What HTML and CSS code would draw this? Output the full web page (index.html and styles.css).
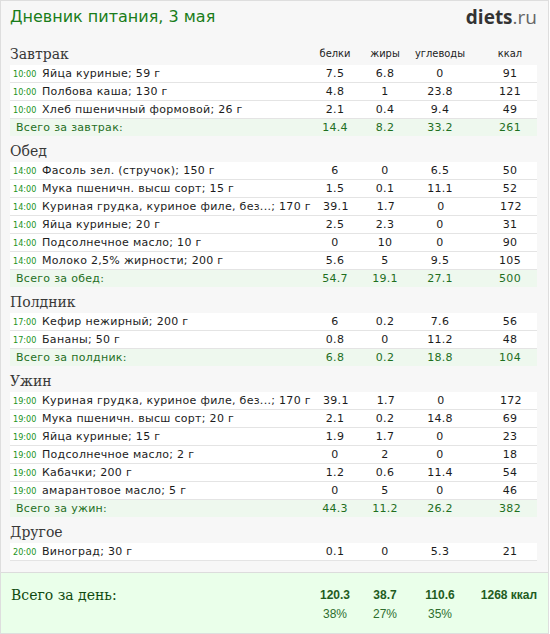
FILE: index.html
```html
<!DOCTYPE html>
<html lang="ru">
<head>
<meta charset="utf-8">
<title>Дневник питания</title>
<link rel="stylesheet" href="styles.css">
</head>
<body>
<div class="page">
  <header class="top">
    <h1 class="title">Дневник питания, 3 мая</h1>
    <div class="logo"><b>diets</b>.ru</div>
  </header>

  <div class="content">
    <div class="meal-head">
      <div class="meal-name">Завтрак</div>
      <div class="col">белки</div>
      <div class="col">жиры</div>
      <div class="col wide">углеводы</div>
      <div class="col last">ккал</div>
    </div>
    <div class="row"><div class="name"><span class="time">10:00</span>Яйца куриные; 59 г</div><div class="col">7.5</div><div class="col">6.8</div><div class="col wide">0</div><div class="col last">91</div></div>
    <div class="row"><div class="name"><span class="time">10:00</span>Полбова каша; 130 г</div><div class="col">4.8</div><div class="col">1</div><div class="col wide">23.8</div><div class="col last">121</div></div>
    <div class="row"><div class="name"><span class="time">10:00</span>Хлеб пшеничный формовой; 26 г</div><div class="col">2.1</div><div class="col">0.4</div><div class="col wide">9.4</div><div class="col last">49</div></div>
    <div class="row total"><div class="name">Всего за завтрак:</div><div class="col">14.4</div><div class="col">8.2</div><div class="col wide">33.2</div><div class="col last">261</div></div>

    <div class="meal-head"><div class="meal-name">Обед</div></div>
    <div class="row"><div class="name"><span class="time">14:00</span>Фасоль зел. (стручок); 150 г</div><div class="col">6</div><div class="col">0</div><div class="col wide">6.5</div><div class="col last">50</div></div>
    <div class="row"><div class="name"><span class="time">14:00</span>Мука пшеничн. высш сорт; 15 г</div><div class="col">1.5</div><div class="col">0.1</div><div class="col wide">11.1</div><div class="col last">52</div></div>
    <div class="row"><div class="name"><span class="time">14:00</span>Куриная грудка, куриное филе, без...; 170 г</div><div class="col">39.1</div><div class="col">1.7</div><div class="col wide">0</div><div class="col last">172</div></div>
    <div class="row"><div class="name"><span class="time">14:00</span>Яйца куриные; 20 г</div><div class="col">2.5</div><div class="col">2.3</div><div class="col wide">0</div><div class="col last">31</div></div>
    <div class="row"><div class="name"><span class="time">14:00</span>Подсолнечное масло; 10 г</div><div class="col">0</div><div class="col">10</div><div class="col wide">0</div><div class="col last">90</div></div>
    <div class="row"><div class="name"><span class="time">14:00</span>Молоко 2,5% жирности; 200 г</div><div class="col">5.6</div><div class="col">5</div><div class="col wide">9.5</div><div class="col last">105</div></div>
    <div class="row total"><div class="name">Всего за обед:</div><div class="col">54.7</div><div class="col">19.1</div><div class="col wide">27.1</div><div class="col last">500</div></div>

    <div class="meal-head"><div class="meal-name">Полдник</div></div>
    <div class="row"><div class="name"><span class="time">17:00</span>Кефир нежирный; 200 г</div><div class="col">6</div><div class="col">0.2</div><div class="col wide">7.6</div><div class="col last">56</div></div>
    <div class="row"><div class="name"><span class="time">17:00</span>Бананы; 50 г</div><div class="col">0.8</div><div class="col">0</div><div class="col wide">11.2</div><div class="col last">48</div></div>
    <div class="row total"><div class="name">Всего за полдник:</div><div class="col">6.8</div><div class="col">0.2</div><div class="col wide">18.8</div><div class="col last">104</div></div>

    <div class="meal-head"><div class="meal-name">Ужин</div></div>
    <div class="row"><div class="name"><span class="time">19:00</span>Куриная грудка, куриное филе, без...; 170 г</div><div class="col">39.1</div><div class="col">1.7</div><div class="col wide">0</div><div class="col last">172</div></div>
    <div class="row"><div class="name"><span class="time">19:00</span>Мука пшеничн. высш сорт; 20 г</div><div class="col">2.1</div><div class="col">0.2</div><div class="col wide">14.8</div><div class="col last">69</div></div>
    <div class="row"><div class="name"><span class="time">19:00</span>Яйца куриные; 15 г</div><div class="col">1.9</div><div class="col">1.7</div><div class="col wide">0</div><div class="col last">23</div></div>
    <div class="row"><div class="name"><span class="time">19:00</span>Подсолнечное масло; 2 г</div><div class="col">0</div><div class="col">2</div><div class="col wide">0</div><div class="col last">18</div></div>
    <div class="row"><div class="name"><span class="time">19:00</span>Кабачки; 200 г</div><div class="col">1.2</div><div class="col">0.6</div><div class="col wide">11.4</div><div class="col last">54</div></div>
    <div class="row"><div class="name"><span class="time">19:00</span>амарантовое масло; 5 г</div><div class="col">0</div><div class="col">5</div><div class="col wide">0</div><div class="col last">46</div></div>
    <div class="row total"><div class="name">Всего за ужин:</div><div class="col">44.3</div><div class="col">11.2</div><div class="col wide">26.2</div><div class="col last">382</div></div>

    <div class="meal-head"><div class="meal-name">Другое</div></div>
    <div class="row"><div class="name"><span class="time">20:00</span>Виноград; 30 г</div><div class="col">0.1</div><div class="col">0</div><div class="col wide">5.3</div><div class="col last">21</div></div>
  </div>

  <footer class="day">
    <div class="day-label">Всего за день:</div>
    <div class="col"><b>120.3</b><span>38%</span></div>
    <div class="col"><b>38.7</b><span>27%</span></div>
    <div class="col wide"><b>110.6</b><span>35%</span></div>
    <div class="col last"><b>1268 ккал</b></div>
  </footer>
</div>
</body>
</html>
```

FILE: styles.css
```css
html, body {
  margin: 0;
  padding: 0;
  background: #ffffff;
}

.page {
  width: 547px;
  height: 632px;
  border: 1px solid #dedede;
  background: #f7f7f7;
  display: flex;
  flex-direction: column;
  font-family: "DejaVu Sans", Verdana, sans-serif;
}

.top {
  height: 38px;
  display: flex;
  justify-content: space-between;
  align-items: flex-start;
  padding: 0 11px 0 9px;
}

.title {
  margin: 0;
  padding-top: 5px;
  font-family: "DejaVu Sans", Verdana, sans-serif;
  font-weight: normal;
  font-size: 16px;
  line-height: 21px;
  color: #1a7d1a;
}

.logo {
  padding-top: 4px;
  font-family: "Open Sans", "DejaVu Sans", sans-serif;
  font-size: 19px;
  line-height: 24px;
  color: #666666;
}

.logo b {
  color: #333333;
  font-weight: 700;
}

.content {
  padding: 0 11px 0 9px;
  display: flex;
  flex-direction: column;
}

.meal-head,
.row,
.day {
  display: grid;
  grid-template-columns: 1fr 50px 50px 60px 67px;
  align-items: center;
}

.col {
  text-align: center;
}

.col.last {
  padding-left: 13px;
}

.meal-head {
  height: 26px;
  align-items: start;
}

.meal-name {
  padding-top: 6px;
  font-family: "DejaVu Serif", "Liberation Serif", serif;
  font-size: 14px;
  line-height: 18px;
  color: #383838;
}

.meal-head .col {
  padding-top: 7px;
  font-family: "DejaVu Sans Condensed", "DejaVu Sans", sans-serif;
  font-stretch: condensed;
  font-size: 11px;
  line-height: 16px;
  color: #222222;
}

.row {
  height: 17px;
  border-bottom: 1px solid #e4e4e4;
  background: #ffffff;
  font-size: 11px;
  letter-spacing: 0.3px;
  color: #1c1c1c;
}

.name {
  padding-left: 3px;
  white-space: nowrap;
}

.time {
  display: inline-block;
  width: 29px;
  font-family: "DejaVu Sans Condensed", "DejaVu Sans", sans-serif;
  font-stretch: condensed;
  font-size: 9px;
  letter-spacing: 0;
  color: #1b931b;
}

.row.total {
  border-bottom: 0;
  background: #eef8ee;
  color: #1f6f1f;
}

.row.total .name {
  padding-left: 6px;
}

.day {
  margin-top: auto;
  height: 60px;
  border-top: 1px solid #dcdcdc;
  background: #eaffea;
  padding: 0 11px 0 10px;
  align-items: start;
}

.day-label {
  padding-top: 13px;
  font-family: "DejaVu Serif", "Liberation Serif", serif;
  font-size: 14px;
  line-height: 18px;
  color: #104a10;
}

.day .col {
  padding-top: 15px;
  display: flex;
  flex-direction: column;
  align-items: center;
  font-family: "Liberation Sans", Arial, sans-serif;
}

.day .col.last {
  padding-left: 11px;
}

.day .col b {
  font-size: 12px;
  line-height: 15px;
  color: #1f5c1f;
  white-space: nowrap;
}

.day .col span {
  margin-top: 4px;
  font-size: 12px;
  line-height: 15px;
  color: #2e6e2e;
}
```
